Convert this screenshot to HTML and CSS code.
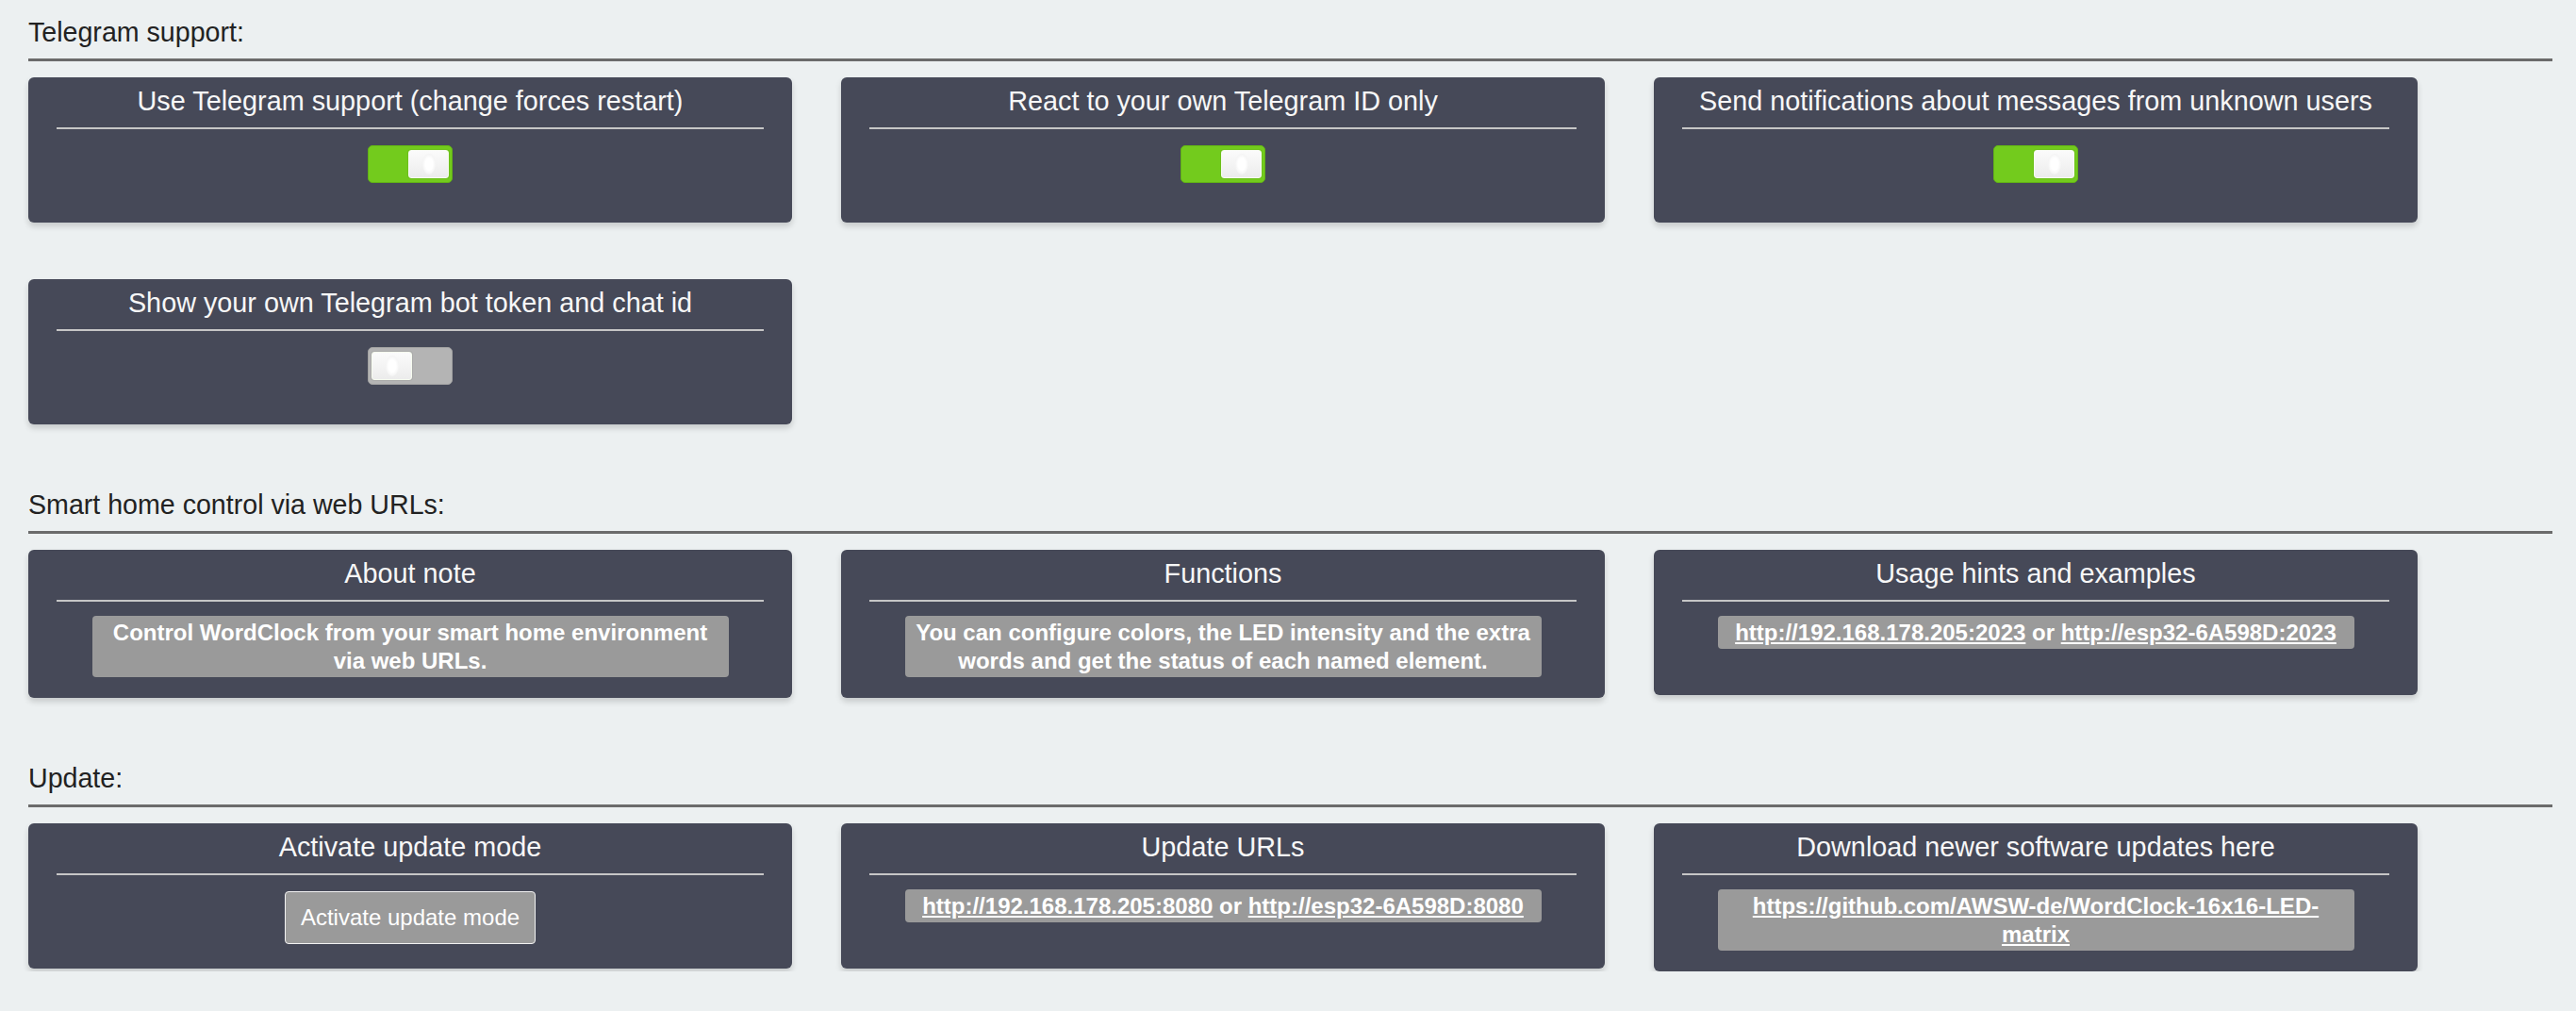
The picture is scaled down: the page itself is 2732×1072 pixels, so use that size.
FILE: index.html
```html
<!DOCTYPE html>
<html lang="en">
<head>
<meta charset="utf-8">
<title>WordClock settings</title>
<link rel="stylesheet" href="styles.css">
</head>
<body>
<main class="page">
  <section class="section">
    <h2 class="section-title">Telegram support:</h2>
    <hr class="section-rule">
    <div class="cards">
      <div class="card">
        <div class="card-title">Use Telegram support (change forces restart)</div>
        <div class="card-body"><span class="toggle on"><span class="knob"></span></span></div>
      </div>
      <div class="card">
        <div class="card-title">React to your own Telegram ID only</div>
        <div class="card-body"><span class="toggle on"><span class="knob"></span></span></div>
      </div>
      <div class="card">
        <div class="card-title">Send notifications about messages from unknown users</div>
        <div class="card-body"><span class="toggle on"><span class="knob"></span></span></div>
      </div>
      <div class="card">
        <div class="card-title">Show your own Telegram bot token and chat id</div>
        <div class="card-body"><span class="toggle off"><span class="knob"></span></span></div>
      </div>
    </div>
  </section>

  <section class="section">
    <h2 class="section-title">Smart home control via web URLs:</h2>
    <hr class="section-rule">
    <div class="cards">
      <div class="card">
        <div class="card-title">About note</div>
        <div class="card-body"><div class="info">Control WordClock from your smart home environment via web URLs.</div></div>
      </div>
      <div class="card">
        <div class="card-title">Functions</div>
        <div class="card-body"><div class="info">You can configure colors, the LED intensity and the extra words and get the status of each named element.</div></div>
      </div>
      <div class="card">
        <div class="card-title">Usage hints and examples</div>
        <div class="card-body"><div class="info"><a class="link" href="#">http://192.168.178.205:2023</a> or <a class="link" href="#">http://esp32-6A598D:2023</a></div></div>
      </div>
    </div>
  </section>

  <section class="section">
    <h2 class="section-title">Update:</h2>
    <hr class="section-rule">
    <div class="cards">
      <div class="card">
        <div class="card-title">Activate update mode</div>
        <div class="card-body"><button class="btn" type="button">Activate update mode</button></div>
      </div>
      <div class="card">
        <div class="card-title">Update URLs</div>
        <div class="card-body"><div class="info"><a class="link" href="#">http://192.168.178.205:8080</a> or <a class="link" href="#">http://esp32-6A598D:8080</a></div></div>
      </div>
      <div class="card">
        <div class="card-title">Download newer software updates here</div>
        <div class="card-body"><div class="info"><a class="link" href="#">https://github.com/AWSW-de/WordClock-16x16-LED-matrix</a></div></div>
      </div>
    </div>
  </section>
</main>
</body>
</html>
```

FILE: styles.css
```css
* {
  box-sizing: border-box;
}

html,
body {
  margin: 0;
}

body {
  background: #ecf0f1;
  font-family: "Liberation Sans", Arial, Helvetica, sans-serif;
  color: #1e1e1e;
}

.page {
  padding: 0 25px 0 30px;
}

.section {
  margin-top: 69px;
}

.section:first-child {
  margin-top: 18px;
}

.section-title {
  margin: 0;
  font-size: 28.6px;
  line-height: 32px;
  font-weight: normal;
  color: #222;
}

.section-rule {
  margin: 12px 0 17px;
  border: 0;
  height: 3px;
  background: #6b6b6b;
}

.cards {
  display: grid;
  grid-template-columns: repeat(3, 810px);
  column-gap: 52px;
  row-gap: 60px;
  align-items: start;
}

.card {
  background: #464958;
  border-radius: 6px;
  box-shadow: 0 4px 6px rgba(0, 0, 0, 0.16);
  min-height: 154px;
  padding: 9px 30px 22px;
}

.card-title {
  color: #f7f7f7;
  font-size: 28.8px;
  line-height: 32px;
  text-align: center;
  padding-bottom: 12px;
  border-bottom: 2px solid #c6c6c6;
}

.card-body {
  padding-top: 15px;
  display: flex;
  justify-content: center;
}

.toggle {
  margin-top: 2px;
  width: 90px;
  height: 40px;
  border-radius: 5px;
  padding: 4px 3px;
  display: flex;
}

.toggle.on {
  background: #73cb1d;
  border: 1px solid #62b316;
  justify-content: flex-end;
}

.toggle.off {
  background: #b4b4b4;
  border: 1px solid #a2a2a2;
  justify-content: flex-start;
}

.knob {
  position: relative;
  width: 43px;
  height: 30px;
  border-radius: 3px;
  background: linear-gradient(#fbfbfb, #ececec);
  border: 1px solid #f6fbef;
  box-shadow: 0 0 0 1px rgba(0, 0, 0, 0.05);
}

.knob::after {
  content: "";
  position: absolute;
  left: 50%;
  top: 50%;
  width: 14px;
  height: 22px;
  margin: -11px 0 0 -7px;
  border-radius: 50%;
  background: radial-gradient(ellipse at center, #ffffff 40%, #e9e9e9 100%);
}

.info {
  width: 90%;
  background: #9a9a9a;
  border-radius: 4px;
  color: #fff;
  font-weight: bold;
  font-size: 24px;
  line-height: 30px;
  padding: 3px 5px 2px;
  text-align: center;
}

.link {
  color: #fff;
  text-decoration: underline;
}

.btn {
  margin-top: 2px;
  background: #9a9a9a;
  color: #fff;
  border: 1px solid #f2f2f2;
  border-radius: 4px;
  font-family: inherit;
  font-size: 24px;
  line-height: 28px;
  padding: 13px 16px;
}
```
